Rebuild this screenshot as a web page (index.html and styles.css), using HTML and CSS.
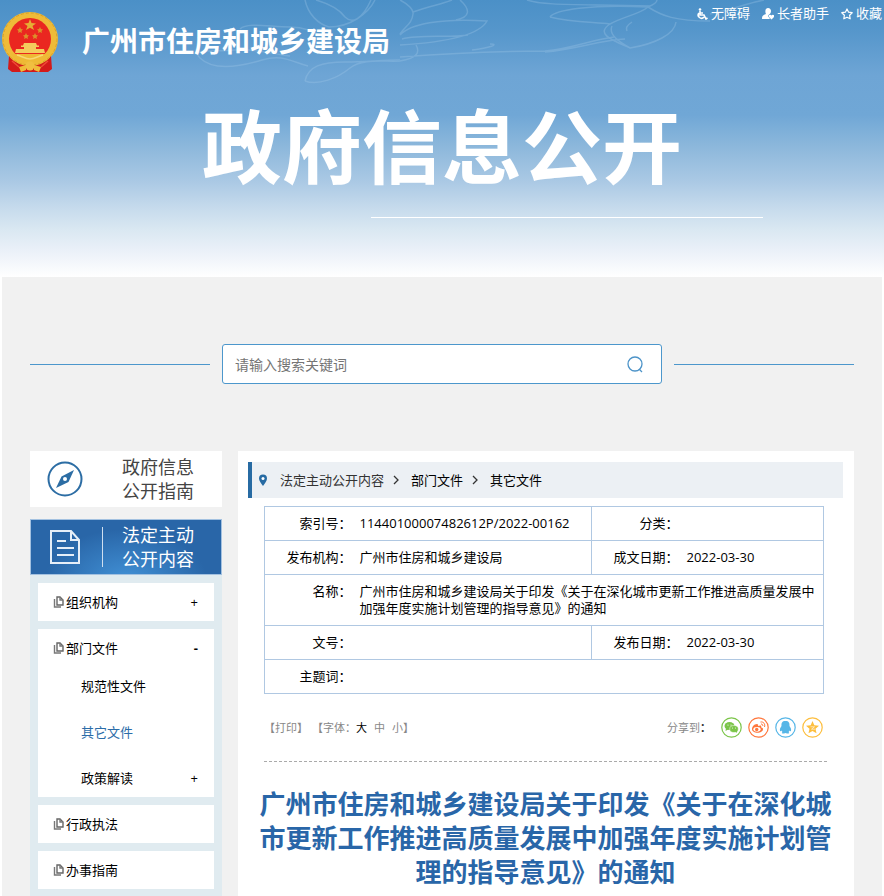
FILE: index.html
```html
<!DOCTYPE html>
<html lang="zh-CN">
<head>
    <meta charset="UTF-8">
    <meta name="viewport" content="width=device-width, initial-scale=1.0">
    <title>广州市住房和城乡建设局 - 政府信息公开</title>
    <link rel="stylesheet" href="styles.css">
</head>
<body>
    <header class="header">
        <!-- Flower line art behind the header -->
        <svg class="header-art" width="640" height="90" viewBox="180 0 640 90" fill="none" stroke="#a5cbea" stroke-width="1.500">
            <path d="M305 0C308 14 318 24 329 27M316 0C330 4 340 10 345 17M329 27C350 27 368 14 375 0M345 17C352 24 362 20 371 0M240 29C248 22 270 27 290 27S320 36 330 40M200 58C190 48 215 52 235 50S270 54 290 56M200 58C214 72 242 66 262 60S290 61 308 66M305 81C308 66 322 62 345 62S380 60 400 60M305 81C318 86 338 78 350 68S385 62 400 61"/>
            <path d="M400 0C408 4 414 10 413 14C412 24 405 26 400 34M413 12C430 6 442 4 452 0M460 0C471 10 470 17 456 20M400 35C410 24 440 18 487 21C480 34 450 42 400 45M402 39C420 34 450 38 468 35M416 45C420 52 418 58 400 61M400 57C440 54 500 51 545 51C575 48 590 40 614 37M472 50C490 48 500 44 490 44M545 52C575 50 600 40 625 39"/>
            <path d="M527 0C545 6 580 4 650 6M550 17C555 10 590 4 648 7M550 17C570 22 590 22 610 24C625 16 640 14 648 7C662 16 675 21 710 21M610 24C595 34 612 40 630 48C655 44 675 34 676 22M612 26C608 35 620 42 630 48M648 7C655 4 657 2 657 0M632 22C626 26 626 28 627 31M710 14C730 10 745 4 764 0"/>
        </svg>
        <div class="topbar">
            <a class="brand" href="#">
                <svg class="emblem" width="56" height="60" viewBox="0 0 56 60">
                    <path d="M7 42L7 57L12 60H44L49 57L49 42Z" fill="#d31a1a"/>
                    <ellipse cx="28" cy="27" rx="28" ry="27" fill="#eebb38"/>
                    <ellipse cx="28" cy="27" rx="27" ry="26" fill="none" stroke="#d99f28" stroke-dasharray="3 2"/>
                    <circle cx="28" cy="27" r="21" fill="#ea2720"/>
                    <path d="M28 7L29.500 11L34 11.500L30.500 14L32 18L28 15.800L24 18L25.500 14L22 11.500L26.500 11Z" fill="#e5ae35"/>
                    <g fill="#dc8f2a">
                        <path d="M18 15L19 17L21 17.500L19.500 19L20 21L18 20L16 21L16.500 19L15 17.500L17 17Z"/>
                        <path d="M38 15L39 17L41 17.500L39.500 19L40 21L38 20L36 21L36.500 19L35 17.500L37 17Z"/>
                        <path d="M24 21L25 23L27 23.500L25.500 25L26 27L24 26L22 27L22.500 25L21 23.500L23 23Z"/>
                        <path d="M33 21L34 23L36 23.500L34.500 25L35 27L33 26L31 27L31.500 25L30 23.500L32 23Z"/>
                    </g>
                    <path d="M22 31H34L35 33.500H37V35H34V37H42L43 41H13L14 37H22V35H19V33.500H21Z" fill="#f4cd5c"/>
                    <path d="M9 42H47L40 50C35 53 31 48 28 48S21 53 16 50Z" fill="#efb935"/>
                    <path d="M15 43C20 44 23 47 28 47S36 44 41 43" fill="none" stroke="#f8d873" stroke-width="1.500"/>
                    <path d="M7 44L11 50L19 54L14 60H10L6 57ZM49 44L45 50L37 54L42 60H46L50 57Z" fill="#d31a1a"/>
                    <path d="M10 49L17 55M46 49L39 55" stroke="#ef4b35" stroke-width="1.500"/>
                    <path d="M17 55L24 53V58L19 60ZM39 55L32 53V58L37 60Z" fill="#f0bb39"/>
                    <circle cx="28" cy="54" r="4.500" fill="#f1bf40"/>
                </svg>
                <span class="brand-name">广州市住房和城乡建设局</span>
            </a>
            <nav class="top-links">
                <a href="#">
                    <svg width="12" height="12" viewBox="0 0 12 12" fill="none" stroke="#fff" stroke-width="1.600">
                        <circle cx="4" cy="1.500" r="1.300" fill="#fff" stroke="none"/>
                        <path d="M4 3V7H8L10 11L11.500 10M4 5H7M3 5A3.200 3.200 0 1 0 8 9"/>
                    </svg>无障碍</a>
                <a href="#">
                    <svg width="12" height="12" viewBox="0 0 12 12" fill="#fff">
                        <path d="M6 0C8 0 9 1.500 9 3C9 5 8 6 7 6.500L6 8L8 11H0C0 8 1 7 4 6C3 4 3 0 6 0Z"/>
                        <path d="M9.500 11.500L7 9C6 7 8.500 6 9.500 7.500C10.500 6 13 7 12 9Z"/>
                    </svg>长者助手</a>
                <a href="#">
                    <svg width="12" height="12" viewBox="0 0 12 12" fill="none" stroke="#fff" stroke-width="1.200" stroke-linejoin="round">
                        <path d="M6 1L7.600 4.200L11.200 4.700L8.600 7.200L9.200 10.800L6 9.200L2.800 10.800L3.400 7.200L0.800 4.700L4.400 4.200Z"/>
                    </svg>收藏</a>
            </nav>
        </div>
        <h1 class="banner-title">政府信息公开</h1>
        <div class="banner-line"></div>
    </header>

    <div class="page">
        <form class="search-row">
            <span class="search-line"></span>
            <div class="search-box">
                <input type="text" placeholder="请输入搜索关键词" aria-label="请输入搜索关键词">
                <button type="button" aria-label="搜索">
                    <svg width="18" height="18" viewBox="0 0 18 18" fill="none" stroke="#4c93c8" stroke-width="1.300">
                        <circle cx="9" cy="9" r="7"/>
                        <path d="M13 14L16 17"/>
                    </svg>
                </button>
            </div>
            <span class="search-line"></span>
        </form>

        <div class="columns">
            <aside class="sidebar">
                <a class="side-tab" href="#">
                    <svg width="36" height="36" viewBox="0 0 36 36">
                        <circle cx="18" cy="18" r="16.500" fill="none" stroke="#2c6da4" stroke-width="2"/>
                        <path d="M27 9L21.500 21L9 27L14.500 15.500Z" fill="#2c6da4"/>
                        <circle cx="18" cy="18" r="2" fill="#fff"/>
                    </svg>
                    <span>政府信息<br>公开指南</span>
                </a>
                <a class="side-tab active" href="#">
                    <svg width="36" height="36" viewBox="0 0 36 36" fill="none" stroke="#e6eef8" stroke-width="2">
                        <path d="M4 2H24L32 11V34H4Z"/>
                        <path d="M24 2V11H32"/>
                        <path d="M10 12H19M10 19H27M10 26H27"/>
                    </svg>
                    <span>法定主动<br>公开内容</span>
                </a>
                <svg class="defs" width="0" height="0">
                    <symbol id="pages" viewBox="0 0 11 12">
                        <path d="M4 1H7L10 4V9H4Z" fill="#fff" stroke="#666" stroke-width="1.400"/>
                        <path d="M7 1V4H10M1.500 3V11H8" fill="none" stroke="#777" stroke-width="1.400"/>
                    </symbol>
                </svg>
                <ul class="side-list">
                    <li class="side-group">
                        <a class="side-item" href="#"><svg width="11" height="12"><use href="#pages"/></svg>组织机构<span class="sign">+</span></a>
                    </li>
                    <li class="side-group">
                        <a class="side-item" href="#"><svg width="11" height="12"><use href="#pages"/></svg>部门文件<b class="sign">-</b></a>
                        <ul class="sub-list">
                            <li><a class="side-item" href="#">规范性文件</a></li>
                            <li><a class="side-item current" href="#">其它文件</a></li>
                            <li><a class="side-item" href="#">政策解读<span class="sign">+</span></a></li>
                        </ul>
                    </li>
                    <li class="side-group">
                        <a class="side-item" href="#"><svg width="11" height="12"><use href="#pages"/></svg>行政执法</a>
                    </li>
                    <li class="side-group">
                        <a class="side-item" href="#"><svg width="11" height="12"><use href="#pages"/></svg>办事指南</a>
                    </li>
                </ul>
            </aside>

            <main class="main">
                <nav class="breadcrumb">
                    <svg class="pin" width="10" height="12" viewBox="0 0 10 12">
                        <path d="M5 12C3 9 1 7 1 4.500A4 4 0 0 1 9 4.500C9 7 7 9 5 12Z" fill="#276ba3"/>
                        <circle cx="5" cy="4.500" r="1.500" fill="#fff"/>
                    </svg>
                    <a class="root" href="#">法定主动公开内容</a>
                    <svg class="arrow" width="8" height="10" viewBox="0 0 8 10"><path d="M2 1L6 5L2 9" fill="none" stroke="#333" stroke-width="1.300"/></svg>
                    <a href="#">部门文件</a>
                    <svg class="arrow" width="8" height="10" viewBox="0 0 8 10"><path d="M2 1L6 5L2 9" fill="none" stroke="#333" stroke-width="1.300"/></svg>
                    <a href="#">其它文件</a>
                </nav>

                <div class="article">
                    <table class="info">
                        <colgroup>
                            <col class="col-label">
                            <col class="col-value">
                            <col class="col-label">
                            <col>
                        </colgroup>
                        <tr>
                            <th>索引号：</th>
                            <td>11440100007482612P/2022-00162</td>
                            <th class="second">分类：</th>
                            <td></td>
                        </tr>
                        <tr>
                            <th>发布机构：</th>
                            <td>广州市住房和城乡建设局</td>
                            <th class="second">成文日期：</th>
                            <td>2022-03-30</td>
                        </tr>
                        <tr>
                            <th>名称：</th>
                            <td colspan="3">广州市住房和城乡建设局关于印发《关于在深化城市更新工作推进高质量发展中加强年度实施计划管理的指导意见》的通知</td>
                        </tr>
                        <tr>
                            <th>文号：</th>
                            <td></td>
                            <th class="second">发布日期：</th>
                            <td>2022-03-30</td>
                        </tr>
                        <tr>
                            <th>主题词：</th>
                            <td colspan="3"></td>
                        </tr>
                    </table>

                    <div class="tools">
                        <div class="print">
                            <a href="#">【打印】</a>
                            <span>【字体：<a class="size on" href="#">大</a><a class="size" href="#">中</a><a class="size" href="#">小</a>】</span>
                        </div>
                        <div class="share">
                            <span class="share-label">分享到<b>：</b></span>
                            <a href="#" aria-label="微信">
                                <svg width="21" height="21" viewBox="0 0 21 21">
                                    <circle cx="10.500" cy="10.500" r="9.700" fill="#fff" stroke="#7bc549" stroke-width="1.200"/>
                                    <ellipse cx="8.500" cy="9" rx="5" ry="4" fill="#7bc549"/>
                                    <path d="M5 11L4.500 14L8 12Z" fill="#7bc549"/>
                                    <ellipse cx="13" cy="12" rx="4.300" ry="3.500" fill="#7bc549" stroke="#fff" stroke-width=".5"/>
                                    <path d="M14 14L16 16L16 13Z" fill="#7bc549"/>
                                    <g fill="#fff"><circle cx="7" cy="8" r=".6"/><circle cx="10" cy="8" r=".6"/><circle cx="11.500" cy="11" r=".5"/><circle cx="14.500" cy="11" r=".5"/></g>
                                </svg>
                            </a>
                            <a href="#" aria-label="微博">
                                <svg width="21" height="21" viewBox="0 0 21 21" fill="none">
                                    <circle cx="10.500" cy="10.500" r="9.700" fill="#fff" stroke="#ff763b" stroke-width="1.200"/>
                                    <path d="M9 7C6 7 4 10 4 12C4 17 15 17 15 12C15 11 14 10.500 13 10.500C14 8 12 8 10 9C10.500 8 10 7 9 7Z" fill="#ff763b"/>
                                    <ellipse cx="9" cy="12.300" rx="3.600" ry="2.400" fill="#fff"/>
                                    <circle cx="8.700" cy="12.500" r="1.700" fill="#ff763b"/>
                                    <path d="M12.500 5C15.500 4.500 17.500 7 16.500 10M13 7C14.500 7 15 8 14.700 9" stroke="#ff763b"/>
                                </svg>
                            </a>
                            <a href="#" aria-label="QQ">
                                <svg width="21" height="21" viewBox="0 0 21 21">
                                    <circle cx="10.500" cy="10.500" r="9.700" fill="#fff" stroke="#56b6e7" stroke-width="1.200"/>
                                    <path d="M10.500 4C7 4 6.300 6 6.500 9C5.500 10.500 4.500 12 5 14C5.500 14.500 6 14 6.500 13.500C6.500 14 7 14.500 7.500 15C6 16 7 16.500 9 16.500L10.500 16L12 16.500C14 16.500 15 16 13.500 15C14 14.500 14.500 14 14.500 13.500C15 14 15.500 14.500 16 14C16.500 12 15.500 10.500 14.500 9C14.700 6 14 4 10.500 4Z" fill="#56b6e7"/>
                                </svg>
                            </a>
                            <a href="#" aria-label="QQ空间">
                                <svg width="21" height="21" viewBox="0 0 21 21">
                                    <circle cx="10.500" cy="10.500" r="9.700" fill="#fff" stroke="#fdbe3d" stroke-width="1.200"/>
                                    <path d="M10.500 4L12.300 8.200L17 8.700L13.500 11.800L14.500 16.300L10.500 14L6.500 16.300L7.500 11.800L4 8.700L8.700 8.200Z" fill="#fdbe3d"/>
                                    <path d="M8.500 9.800H12.500L9.500 12.200H13" fill="none" stroke="#fff" stroke-width=".6"/>
                                </svg>
                            </a>
                        </div>
                    </div>

                    <h2 class="article-title">广州市住房和城乡建设局关于印发《关于在深化城市更新工作推进高质量发展中加强年度实施计划管理的指导意见》的通知</h2>
                </div>
            </main>
        </div>
    </div>
</body>
</html>
```

FILE: styles.css
```css
* {
    box-sizing: border-box;
}

body {
    display: flex;
    flex-direction: column;
    min-height: 100vh;
    margin: 0;
    background: #fff;
    color: #000;
    font-family: "Open Sans", "Noto Sans CJK SC", sans-serif;
    font-size: 13px;
    line-height: 17px;
}

a {
    color: inherit;
    text-decoration: none;
}

ul {
    list-style: none;
    margin: 0;
    padding: 0;
}

svg {
    display: block;
    flex: none;
}

/* Header */
.header {
    position: relative;
    height: 277px;
    background: linear-gradient(#4b90c7 0, #5596cb 30px, #6ea5d5 75px, #70a7d6 115px, #8bb7db 145px, #a9c8e4 180px, #c5daec 207px, #dae8f2 230px, #eaf0f8 250px, #fff 277px);
}

.header-art {
    position: absolute;
    top: 0;
    left: 180px;
    opacity: 0.3;
}

.topbar {
    position: relative;
    display: flex;
    justify-content: space-between;
    align-items: flex-start;
    padding: 0 2px;
}

.brand {
    display: flex;
    gap: 24px;
    padding-top: 12px;
    color: #fff;
}

.brand-name {
    font-size: 28px;
    font-weight: bold;
    line-height: 58px;
}

.top-links {
    display: flex;
    gap: 12px;
    padding-top: 5px;
    color: #fff;
}

.top-links a {
    display: flex;
    align-items: center;
    gap: 3px;
}

.banner-title {
    margin: 24px 0 0;
    color: #fff;
    font-size: 80px;
    font-weight: bold;
    line-height: 100px;
    text-align: center;
}

.banner-line {
    width: 392px;
    height: 1px;
    margin: 21px 0 0 42%;
    background: #fff;
}

/* Page body */
.page {
    flex: 1;
    display: flex;
    flex-direction: column;
    margin: 0 2px;
    padding: 67px 28px 0;
    background: #f1f1f1;
}

.search-row {
    display: flex;
    align-items: center;
    gap: 12px;
}

.search-line {
    flex: 1;
    height: 1px;
    background: #4c97cc;
}

.search-box {
    display: flex;
    width: 440px;
    height: 40px;
    background: #fff;
    border: 1px solid #4c97cc;
    border-radius: 3px;
}

.search-box input {
    flex: 1;
    padding: 0 12px;
    border: none;
    outline: none;
    background: none;
    font-family: inherit;
    font-size: 14px;
}

.search-box input::placeholder {
    color: #757575;
}

.search-box button {
    display: flex;
    align-items: center;
    justify-content: center;
    width: 52px;
    padding: 0;
    border: none;
    background: none;
    cursor: pointer;
}

.columns {
    flex: 1;
    display: flex;
    gap: 16px;
    margin-top: 67px;
}

/* Sidebar */
.sidebar {
    display: flex;
    flex-direction: column;
    width: 192px;
}

.side-tab {
    display: flex;
    align-items: center;
    height: 56px;
    padding-left: 17px;
    background: #fff;
    color: #444;
    font-size: 18px;
    line-height: 24px;
}

.side-tab span {
    flex: 1;
    margin-left: 20px;
    padding-left: 19px;
}

.side-tab.active {
    margin-top: 12px;
    border: 1px solid #a3c1e0;
    padding-left: 16px;
    background: radial-gradient(ellipse at 50% 110%, #4190d5 0, #2966a8 60%);
    color: #fff;
}

.side-tab.active span {
    display: flex;
    align-items: center;
    height: 40px;
    margin-left: 19px;
    border-left: 1px solid #cfdff0;
}

.defs {
    position: absolute;
}

.side-list {
    flex: 1;
    padding: 8px;
    background: #e0ebf0;
}

.side-group {
    margin-bottom: 8px;
    background: #fff;
}

.side-item {
    display: flex;
    align-items: center;
    gap: 2px;
    height: 38px;
    padding: 0 16px 0 15px;
}

.side-item .sign {
    margin-left: auto;
}

.sub-list .side-item {
    padding-left: 43px;
}

.sub-list li + li {
    margin-top: 8px;
}

.side-item.current {
    color: #2b6ca8;
}

/* Main column */
.main {
    flex: 1;
    min-width: 0;
    padding: 11px 11px 0 10px;
    background: #fff;
}

.breadcrumb {
    display: flex;
    align-items: center;
    height: 36px;
    padding-left: 6px;
    border-left: 4px solid #276ba3;
    background: #ecf0f4;
}

.breadcrumb .root {
    margin-left: 12px;
    color: #333;
}

.breadcrumb .arrow {
    margin: 0 11px 0 8px;
}

.article {
    padding: 8px 16px 0;
}

.info {
    width: 560px;
    max-width: 100%;
    border-collapse: collapse;
    table-layout: fixed;
}

.info tr {
    border: 1px solid #b0c8e2;
}

.col-label {
    width: 87px;
}

.col-value {
    width: 240px;
}

.info th,
.info td {
    height: 34px;
    padding: 8px 0;
    font-weight: normal;
    vertical-align: top;
}

.info th {
    text-align: right;
}

.info td {
    padding: 8px;
    text-align: left;
}

.info .second {
    border-left: 1px solid #b0c8e2;
}

.tools {
    display: flex;
    align-items: center;
    justify-content: space-between;
    height: 68px;
    border-bottom: 1px dashed #aaa;
    color: #888;
    font-size: 11px;
}

.print {
    display: flex;
    gap: 4px;
}

.print .size {
    margin-right: 7px;
}

.print .size:last-child {
    margin-right: 0;
}

.print .on {
    color: #000;
}

.share {
    display: flex;
    align-items: center;
    gap: 6px;
    padding-right: 4px;
}

.share-label {
    margin-right: 4px;
}

.share-label b {
    color: #333;
}

.article-title {
    margin: 25px -8px 0;
    color: #2966a8;
    font-size: 26px;
    font-weight: bold;
    line-height: 34px;
    text-align: center;
}
```
